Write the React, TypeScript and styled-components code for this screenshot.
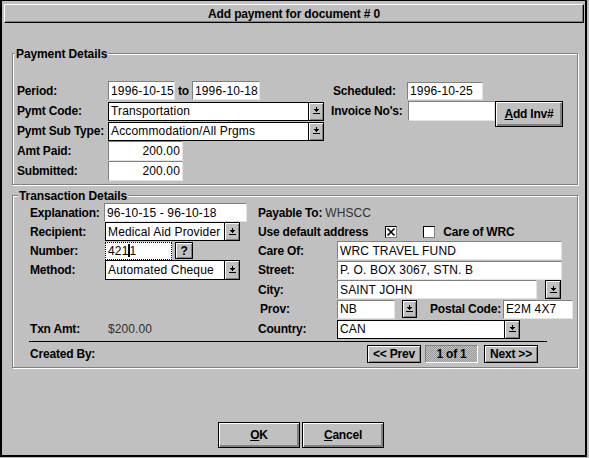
import React from 'react';
import styled, { createGlobalStyle } from 'styled-components';

const GlobalStyle = createGlobalStyle`
  html, body { margin: 0; padding: 0; background: #c0c0c0; }
  body { font-family: "Liberation Sans", Arial, sans-serif; font-size: 12px; color: #000; }
  * { box-sizing: border-box; }
`;

const Window = styled.div`
  width: 587px;
  height: 457px;
  background: #c0c0c0;
  border: 2px solid #000;
  border-top-width: 1px;
  display: flex;
  flex-direction: column;
`;

const TitleBar = styled.div`
  margin: 3px 1px 0 2px;
  height: 19px;
  border-top: 1px solid #fff;
  border-left: 1px solid #fff;
  border-right: 1px solid #000;
  border-bottom: 1px solid #000;
  box-shadow: inset -1px -1px 0 #808080;
  display: flex;
  align-items: center;
  justify-content: center;
  font-weight: bold;
  letter-spacing: -0.15px;
`;

const Group = styled.section<{ $mt: number }>`
  position: relative;
  margin: ${p => p.$mt}px 7px 0 10px;
  border: 1px solid #808080;
  box-shadow: inset 1px 1px 0 #fff, 1px 1px 0 #fff;
`;

const Legend = styled.span<{ $left: number }>`
  position: absolute;
  top: -7px;
  left: ${p => p.$left}px;
  padding: 0 1px;
  background: #c0c0c0;
  font-weight: bold;
  line-height: 14px;
  letter-spacing: -0.1px;
  white-space: nowrap;
`;

const PaymentGrid = styled.div`
  display: grid;
  grid-template-columns: 91px 223px 76px 87px 69px;
  grid-template-rows: 21px 20px 20px 20px 20px;
  align-items: center;
  padding: 26px 0 3px 4px;
`;

const TxnBody = styled.div`
  padding: 7px 3px 4px 17px;
`;

const TxnGrid = styled.div`
  display: grid;
  grid-template-columns: 75px 142px 11px 79px 236px;
  grid-template-rows: 19px 19px 19px 20px 19px 20px 20px;
  align-items: center;
`;

const Cell = styled.div<{ $col: string; $row: string; $start?: boolean }>`
  grid-column: ${p => p.$col};
  grid-row: ${p => p.$row};
  align-self: ${p => (p.$start ? 'start' : 'center')};
  display: flex;
  align-items: center;
  white-space: nowrap;
  min-width: 0;
`;

const Label = styled.span<{ $ml?: number; $mr?: number }>`
  font-weight: bold;
  line-height: 14px;
  letter-spacing: -0.2px;
  white-space: nowrap;
  margin-left: ${p => p.$ml ?? 0}px;
  margin-right: ${p => p.$mr ?? 0}px;
`;

const Value = styled.span<{ $ml?: number }>`
  color: #303030;
  line-height: 14px;
  letter-spacing: 0.1px;
  margin-left: ${p => p.$ml ?? 0}px;
`;

const Field = styled.div<{ $w: number; $h?: number; $right?: boolean; $ml?: number; $focus?: boolean }>`
  width: ${p => p.$w}px;
  height: ${p => p.$h ?? 19}px;
  margin-left: ${p => p.$ml ?? 0}px;
  background: #fff;
  border: 1px ${p => (p.$focus ? 'dotted' : 'solid')};
  border-color: ${p => (p.$focus ? '#000' : '#808080 #e4e4e4 #e4e4e4 #808080')};
  padding: 0 2px 0 2px;
  display: flex;
  align-items: center;
  justify-content: ${p => (p.$right ? 'flex-end' : 'flex-start')};
  letter-spacing: 0.15px;
  white-space: nowrap;
  overflow: hidden;
  flex-shrink: 0;
`;

const Caret = styled.span`
  display: inline-block;
  width: 2px;
  height: 13px;
  background: #000;
  margin-right: -1px;
`;

const Combo = styled.div<{ $w: number; $h?: number }>`
  width: ${p => p.$w}px;
  height: ${p => p.$h ?? 19}px;
  display: flex;
  border: 1px solid #000;
  background: #fff;
  flex-shrink: 0;
`;

const ComboText = styled.div`
  flex: 1;
  padding: 0 2px;
  display: flex;
  align-items: center;
  letter-spacing: 0.15px;
  white-space: nowrap;
  overflow: hidden;
`;

const ComboButton = styled.div`
  width: 15px;
  margin-left: 1px;
  border-left: 1px solid #000;
  background: #c0c0c0;
  box-shadow: inset 1px 1px 0 #fff, inset -1px -1px 0 #808080;
  display: flex;
  align-items: center;
  justify-content: center;
`;

const ArrowButton = styled.div<{ $w: number; $h: number; $ml: number }>`
  width: ${p => p.$w}px;
  height: ${p => p.$h}px;
  margin-left: ${p => p.$ml}px;
  border: 1px solid #000;
  background: #c0c0c0;
  box-shadow: inset 1px 1px 0 #fff, inset -1px -1px 0 #808080;
  display: flex;
  align-items: center;
  justify-content: center;
  flex-shrink: 0;
`;

const PushButton = styled.button<{ $w: number; $h: number; $thick?: boolean; $ml?: number }>`
  width: ${p => p.$w}px;
  height: ${p => p.$h}px;
  margin: 0 0 0 ${p => p.$ml ?? 0}px;
  padding: 0;
  font: bold 12px "Liberation Sans", Arial, sans-serif;
  letter-spacing: -0.2px;
  color: #000;
  background: #c0c0c0;
  border: 1px solid #000;
  box-shadow: ${p =>
    p.$thick
      ? 'inset 1px 1px 0 #fff, inset -2px -2px 0 #808080'
      : 'inset 1px 1px 0 #fff, inset -1px -1px 0 #808080'};
  display: flex;
  align-items: center;
  justify-content: center;
  flex-shrink: 0;
  white-space: nowrap;
`;

const Mnemonic = styled.span`
  text-decoration: underline;
`;

const PageBox = styled.div`
  width: 53px;
  height: 18px;
  margin-left: 4px;
  border: 1px solid;
  border-color: #808080 #fff #fff #808080;
  background: repeating-conic-gradient(#c0c0c0 0 25%, #9a9a9a 0 50%) 0 0 / 2px 2px;
  font-weight: bold;
  letter-spacing: -0.2px;
  display: flex;
  align-items: center;
  justify-content: center;
`;

const CheckBox = styled.span<{ $ml: number }>`
  width: 12px;
  height: 12px;
  margin-left: ${p => p.$ml}px;
  background: #fff;
  border: 1px solid;
  border-color: #000 #808080 #808080 #000;
  display: inline-flex;
  align-items: center;
  justify-content: center;
  flex-shrink: 0;
`;

const Separator = styled.div`
  height: 1px;
  width: 518px;
  background: #000;
  margin: 2px 0 0 -1px;
`;

const FooterRow = styled.div`
  display: flex;
  align-items: center;
  height: 18px;
  margin-top: 3px;
  padding-right: 36px;
`;

const Pager = styled.div`
  margin-left: auto;
  display: flex;
  align-items: center;
`;

const DialogButtons = styled.div`
  margin-top: 54px;
  display: flex;
  justify-content: center;
  gap: 2px;
  padding-left: 15px;
`;

const DownArrow = () => (
  <svg width="7" height="8" viewBox="0 0 7 8" shapeRendering="crispEdges">
    <rect x="3" y="0" width="1" height="2" fill="#000" />
    <rect x="1" y="2" width="5" height="1" fill="#000" />
    <rect x="2" y="3" width="3" height="1" fill="#000" />
    <rect x="3" y="4" width="1" height="1" fill="#000" />
    <rect x="0" y="6" width="7" height="1" fill="#000" />
  </svg>
);

const Cross = () => (
  <svg width="10" height="10" viewBox="0 0 10 10">
    <path d="M1.5 1.5 L8.5 8.5 M8.5 1.5 L1.5 8.5" stroke="#000" strokeWidth="1.6" />
  </svg>
);

const ComboBox: React.FC<{ w: number; h?: number; text?: string }> = ({ w, h, text }) => (
  <Combo $w={w} $h={h}>
    <ComboText>{text}</ComboText>
    <ComboButton>
      <DownArrow />
    </ComboButton>
  </Combo>
);

export default function App() {
  return (
    <>
      <GlobalStyle />
      <Window>
        <TitleBar>Add payment for document # 0</TitleBar>

        <Group $mt={30}>
          <Legend $left={2}>Payment Details</Legend>
          <PaymentGrid>
            <Cell $col="1" $row="1"><Label>Period:</Label></Cell>
            <Cell $col="2" $row="1">
              <Field $w={67}>1996-10-15</Field>
              <Label $ml={3} $mr={3}>to</Label>
              <Field $w={68}>1996-10-18</Field>
            </Cell>
            <Cell $col="3" $row="1"><Label $ml={2}>Scheduled:</Label></Cell>
            <Cell $col="4" $row="1"><Field $w={76} $h={18}>1996-10-25</Field></Cell>

            <Cell $col="1" $row="2"><Label>Pymt Code:</Label></Cell>
            <Cell $col="2" $row="2"><ComboBox w={216} text="Transportation" /></Cell>
            <Cell $col="3" $row="2"><Label>Invoice No's:</Label></Cell>
            <Cell $col="4" $row="2"><Field $w={87} $h={20} $ml={1} /></Cell>
            <Cell $col="5" $row="2 / 4" $start>
              <PushButton $w={68} $h={26} $thick $ml={1}>
                <Mnemonic>A</Mnemonic>dd Inv#
              </PushButton>
            </Cell>

            <Cell $col="1" $row="3"><Label>Pymt Sub Type:</Label></Cell>
            <Cell $col="2" $row="3"><ComboBox w={216} text="Accommodation/All Prgms" /></Cell>

            <Cell $col="1" $row="4"><Label>Amt Paid:</Label></Cell>
            <Cell $col="2" $row="4"><Field $w={75} $h={20} $right>200.00</Field></Cell>

            <Cell $col="1" $row="5"><Label>Submitted:</Label></Cell>
            <Cell $col="2" $row="5"><Field $w={75} $h={20} $right>200.00</Field></Cell>
          </PaymentGrid>
        </Group>

        <Group $mt={10}>
          <Legend $left={5}>Transaction Details</Legend>
          <TxnBody>
            <TxnGrid>
              <Cell $col="1" $row="1"><Label>Explanation:</Label></Cell>
              <Cell $col="2" $row="1"><Field $w={143} $ml={-1}>96-10-15 - 96-10-18</Field></Cell>
              <Cell $col="4 / 6" $row="1">
                <Label>Payable To:</Label>
                <Value $ml={3}>WHSCC</Value>
              </Cell>

              <Cell $col="1" $row="2"><Label>Recipient:</Label></Cell>
              <Cell $col="2" $row="2"><ComboBox w={135} text="Medical Aid Provider" /></Cell>
              <Cell $col="4 / 6" $row="2">
                <Label>Use default address</Label>
                <CheckBox $ml={17}><Cross /></CheckBox>
                <CheckBox $ml={26} />
                <Label $ml={8}>Care of WRC</Label>
              </Cell>

              <Cell $col="1" $row="3"><Label>Number:</Label></Cell>
              <Cell $col="2" $row="3">
                <Field $w={67} $h={18} $focus>421<Caret />1</Field>
                <PushButton $w={18} $h={17} $ml={3}>?</PushButton>
              </Cell>
              <Cell $col="4" $row="3"><Label>Care Of:</Label></Cell>
              <Cell $col="5" $row="3"><Field $w={225}>WRC TRAVEL FUND</Field></Cell>

              <Cell $col="1" $row="4"><Label>Method:</Label></Cell>
              <Cell $col="2" $row="4"><ComboBox w={135} h={20} text="Automated Cheque" /></Cell>
              <Cell $col="4" $row="4"><Label>Street:</Label></Cell>
              <Cell $col="5" $row="4"><Field $w={225}>P. O. BOX 3067, STN. B</Field></Cell>

              <Cell $col="4" $row="5"><Label>City:</Label></Cell>
              <Cell $col="5" $row="5">
                <Field $w={200}>SAINT JOHN</Field>
                <ArrowButton $w={16} $h={19} $ml={8}><DownArrow /></ArrowButton>
              </Cell>

              <Cell $col="4" $row="6"><Label $ml={2}>Prov:</Label></Cell>
              <Cell $col="5" $row="6">
                <Field $w={58}>NB</Field>
                <ArrowButton $w={15} $h={18} $ml={7}><DownArrow /></ArrowButton>
                <Label $ml={13} $mr={2}>Postal Code:</Label>
                <Field $w={70}>E2M 4X7</Field>
              </Cell>

              <Cell $col="1" $row="7"><Label>Txn Amt:</Label></Cell>
              <Cell $col="2" $row="7"><Value $ml={3}>$200.00</Value></Cell>
              <Cell $col="4" $row="7"><Label>Country:</Label></Cell>
              <Cell $col="5" $row="7"><ComboBox w={183} text="CAN" /></Cell>
            </TxnGrid>
            <Separator />
            <FooterRow>
              <Label>Created By:</Label>
              <Pager>
                <PushButton $w={54} $h={18}>&lt;&lt; Prev</PushButton>
                <PageBox>1 of 1</PageBox>
                <PushButton $w={54} $h={18} $ml={6}>Next &gt;&gt;</PushButton>
              </Pager>
            </FooterRow>
          </TxnBody>
        </Group>

        <DialogButtons>
          <PushButton $w={82} $h={26} $thick>
            <Mnemonic>O</Mnemonic>K
          </PushButton>
          <PushButton $w={82} $h={26} $thick>
            <Mnemonic>C</Mnemonic>ancel
          </PushButton>
        </DialogButtons>
      </Window>
    </>
  );
}
